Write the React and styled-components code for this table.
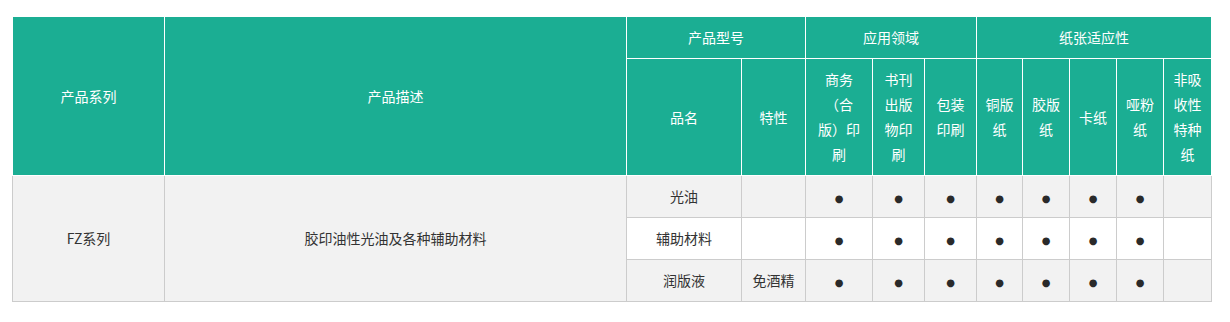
import React from 'react';
import styled, { createGlobalStyle } from 'styled-components';

const GlobalStyle = createGlobalStyle`
  body {
    margin: 0;
    background: #fff;
    font-family: "Noto Sans CJK SC", "Liberation Sans", sans-serif;
  }
`;

// column widths, left to right
const widths = [152, 462, 115, 64, 67, 52, 52, 46, 47, 47, 47, 48];

const usage = ['商务（合版）印刷', '书刊出版物印刷', '包装印刷'];
const papers = ['铜版纸', '胶版纸', '卡纸', '哑粉纸', '非吸收性特种纸'];

// each product row: name, feature, and which of the 8 marks are set
const rows = [
  { name: '光油', feature: '', marks: [1, 1, 1, 1, 1, 1, 1, 0] },
  { name: '辅助材料', feature: '', marks: [1, 1, 1, 1, 1, 1, 1, 0] },
  { name: '润版液', feature: '免酒精', marks: [1, 1, 1, 1, 1, 1, 1, 0] },
];

const Page = styled.div`
  padding: 16px 12px;
`;

const Table = styled.table`
  width: 1199px;
  table-layout: fixed;
  border-collapse: collapse;
  font-size: 14px;
  line-height: 25px;
  text-align: center;
  text-spacing-trim: space-all;
`;

const HeadCell = styled.th`
  background: #1bae93;
  color: #fff;
  font-weight: normal;
  border: 1px solid #fff;
  padding: 8px;
  vertical-align: middle;
`;

const Row = styled.tr`
  background: ${p => (p.$alt ? '#fff' : '#f2f2f2')};
`;

const Cell = styled.td`
  border: 1px solid #ccc;
  padding: 8px;
  color: #333;
  vertical-align: middle;
  background: ${p => (p.$grey ? '#f2f2f2' : 'inherit')};
`;

const Dot = styled.span`
  font-family: "DejaVu Sans", sans-serif;
  font-size: 10px;
  line-height: 10px;
  color: #2a2a2a;
`;

export default function App() {
  return (
    <Page>
      <GlobalStyle />
      <Table>
        <colgroup>
          {widths.map((w, i) => (
            <col key={i} style={{ width: w }} />
          ))}
        </colgroup>
        <thead>
          <tr>
            <HeadCell rowSpan={2}>产品系列</HeadCell>
            <HeadCell rowSpan={2}>产品描述</HeadCell>
            <HeadCell colSpan={2}>产品型号</HeadCell>
            <HeadCell colSpan={3}>应用领域</HeadCell>
            <HeadCell colSpan={5}>纸张适应性</HeadCell>
          </tr>
          <tr>
            <HeadCell>品名</HeadCell>
            <HeadCell>特性</HeadCell>
            {usage.map(t => (
              <HeadCell key={t}>{t}</HeadCell>
            ))}
            {papers.map(t => (
              <HeadCell key={t}>{t}</HeadCell>
            ))}
          </tr>
        </thead>
        <tbody>
          {rows.map((r, i) => (
            <Row key={r.name} $alt={i === 1}>
              {i === 0 && (
                <>
                  <Cell rowSpan={3} $grey>FZ系列</Cell>
                  <Cell rowSpan={3} $grey>胶印油性光油及各种辅助材料</Cell>
                </>
              )}
              <Cell>{r.name}</Cell>
              <Cell>{r.feature}</Cell>
              {r.marks.map((m, j) => (
                <Cell key={j}>{m ? <Dot>●</Dot> : null}</Cell>
              ))}
            </Row>
          ))}
        </tbody>
      </Table>
    </Page>
  );
}
